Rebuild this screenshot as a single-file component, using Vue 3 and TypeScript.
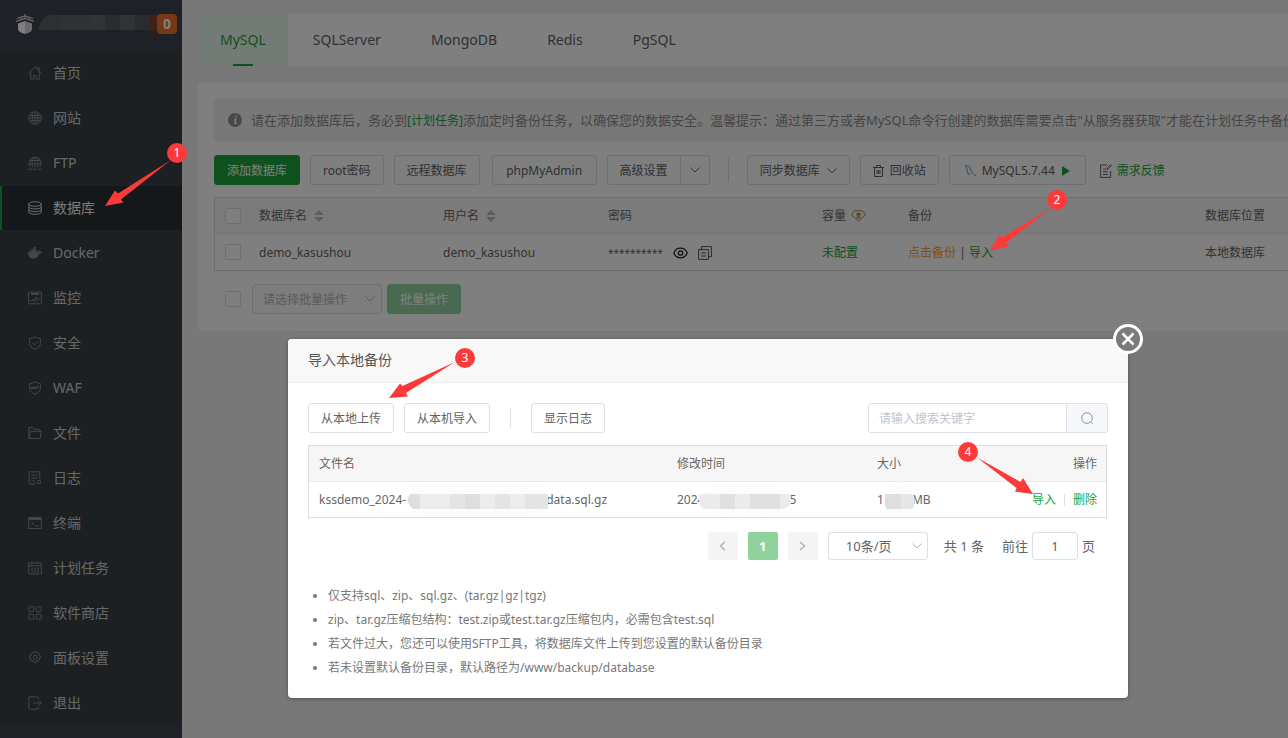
<script setup lang="ts">
import { ref } from 'vue'

interface MenuItem {
  label: string
  d: string
  solid?: boolean
}

const menu: MenuItem[] = [
  { label: '首页', d: 'M.8 7 7 1l6.2 6M2.8 5.500V13.200h3V9.500h2.400v3.700h3V5.500M9 1.500h2.200v2.500' },
  { label: '网站', d: 'M7 .8a6.2 6.2 0 1 0 0 12.4A6.2 6.2 0 0 0 7 .8ZM1.5 4.5h11M.8 7h12.4M1.5 9.5h11M7 .8v12.4M4.3 1.5v11M9.7 1.5v11' },
  { label: 'FTP', d: 'M2.600 11.200a6 6 0 1 1 8.800 0M1.800 4.500h10.400M1 8h12M7 1v10.500M4.800 1.500c-1.200 3-1.200 6.500 0 9.700M9.200 1.500c1.200 3 1.200 6.500 0 9.700M.5 13.200h4M5.500 13.200h3M9.500 13.200h4' },
  { label: '数据库', d: 'M.8 3c0-3 12.4-3 12.4 0s-12.4 3-12.4 0v8c0 3 12.4 3 12.4 0V3M.8 5.8c0 2.8 12.4 2.8 12.4 0M.8 8.5c0 2.8 12.4 2.8 12.4 0' },
  { label: 'Docker', d: 'M0 6.600h1.200V4.700h1.900v1.900h.3V4.700H3.400V2.800h1.900v1.900h.3V2.800h.300V1h1.900v5.600h.3V4.700h1.700v1.900h.6c.5-.7.3-1.600-.1-2.300l.5-.5c.7.5 1 1.100 1.100 1.700.7-.1 1.400 0 2.100.5-.4 1-1.200 1.500-2.400 1.500-1.300 3.400-3.500 5-6.500 5C1.800 12.800 0 10.300 0 6.600Z', solid: true },
  { label: '监控', d: 'M.6 1.200h12.800v11.600H.6zM3 2.500h8M3 3.500h8M2.500 9.800h1.500l1.200-2 1.300 2.700 1.700-4.500 1.300 3 1.200-1h1' },
  { label: '安全', d: 'M7 .8c1.700 1.200 3.600 1.600 5.400 1.700v4.700c0 3-2.400 5-5.400 6-3-1-5.400-3-5.400-6V2.500C3.400 2.400 5.300 2 7 .8ZM4.500 7l2 1.900 3.300-3.500' },
  { label: 'WAF', d: 'M7 .8c1.700 1.200 3.600 1.600 5.400 1.700v4.700c0 3-2.400 5-5.400 6-3-1-5.400-3-5.400-6V2.500C3.400 2.400 5.300 2 7 .8ZM3 5.500l.7 2.500.7-2 .7 2 .6-2.500M6 8l.9-2.500L7.800 8M6.300 7.300h1.200M9 8.200V5.600h2M9 6.900h1.600' },
  { label: '文件', d: 'M.8 12.500V1.500h4l1.400 1.800h5.600v2M.8 12.500 2.800 5.300h10.600l-1.300 7.200Z' },
  { label: '日志', d: 'M8 13H1.200V.8h10.600v7M3.500 4h6M3.500 7h6M3.500 10h3.500M11 9.300a1.700 1.700 0 1 0 0 3.400 1.700 1.700 0 0 0 0-3.400Z' },
  { label: '终端', d: 'M.7 1.500h12.600v11H.7zM.7 2.500h12.600M.7 3.500h12.600M3.500 6l2 1.800-2 1.800M7 10h3.500' },
  { label: '计划任务', d: 'M.7 2h12.600v11H.7zM.7 4.800h12.600M4 .5v2.500M10 .5v2.500M3 7.200h2M6 7.200h2M9 7.200h2M3 9h2M6 9h2M9 9h2M3 11h2M6 11h2M9 11h2' },
  { label: '软件商店', d: 'M1.800.7h3a1 1 0 0 1 1 1v3a1 1 0 0 1-1 1h-3a1 1 0 0 1-1-1v-3a1 1 0 0 1 1-1ZM9.200.7h3a1 1 0 0 1 1 1v3a1 1 0 0 1-1 1h-3a1 1 0 0 1-1-1v-3a1 1 0 0 1 1-1ZM1.800 8.200h3a1 1 0 0 1 1 1v3a1 1 0 0 1-1 1h-3a1 1 0 0 1-1-1v-3a1 1 0 0 1 1-1ZM9.200 8.200h3a1 1 0 0 1 1 1v3a1 1 0 0 1-1 1h-3a1 1 0 0 1-1-1v-3a1 1 0 0 1 1-1Z' },
  { label: '面板设置', d: 'M5.500 2.300 6.200.7h1.600l.7 1.600 1.700-.7 1.200 1.200-.7 1.700 1.800.8v1.500l-1.800.8.9 1.800-1.200 1.200-1.900-.8-.7 1.800H6.200l-.7-1.800-1.900.8-1.200-1.200.9-1.800L1.400 6.800V5.300l1.900-.8-.7-1.700 1.200-1.200ZM7 4.300a2 2 0 1 0 0 4 2 2 0 0 0 0-4Z' },
  { label: '退出', d: 'M10.500 3.500V2a1.200 1.200 0 0 0-1.200-1.200H2A1.200 1.200 0 0 0 .8 2v10A1.200 1.200 0 0 0 2 13.200h7.300a1.200 1.200 0 0 0 1.200-1.200v-1.500M5 7h8.200M11 4.800 13.200 7 11 9.200' },
]

const tabs = ['MySQL', 'SQLServer', 'MongoDB', 'Redis', 'PgSQL']
const activeMenu = ref('数据库')
const activeTab = ref('MySQL')
const keyword = ref('')
const jumpPage = ref('1')

const tips = [
  '仅支持sql、zip、sql.gz、(tar.gz|gz|tgz)',
  'zip、tar.gz压缩包结构：test.zip或test.tar.gz压缩包内，必需包含test.sql',
  '若文件过大，您还可以使用SFTP工具，将数据库文件上传到您设置的默认备份目录',
  '若未设置默认备份目录，默认路径为/www/backup/database',
]

const steps = [
  { n: 1, x: 177, y: 153, d: 'M171 160 121 199.500 123.500 202.500 105 206 115 190.500 118 193.500Z' },
  { n: 2, x: 1057, y: 200, d: 'M1051 208 1006 243 1008.500 246.500 990 250.500 999.500 234.500 1002 237.500Z' },
  { n: 3, x: 465, y: 358, d: 'M455 362 406 393 408 396.500 389 398 400 383.500 402.500 386Z' },
  { n: 4, x: 968, y: 452, d: 'M977 457.500 1020.500 482 1023 478 1033 494 1015 491.500 1016.500 488Z' },
]
</script>

<template>
  <div class="page">
    <aside class="side">
      <div class="brand">
        <svg class="logo" width="18" height="20" viewBox="0 0 18 20">
          <path d="M1 4.500 9 2l8 2.500M0 7.500 9 4.500l9 3" fill="none" stroke="#d8d8d8" stroke-width="1.200" />
          <path d="M9 0v5M5 3v3M13 3v3" stroke="#d8d8d8" stroke-width="1" />
          <path d="M2 9.500 9 7v13c-3.500-1-7-2.500-7-5Z" fill="#fff" />
          <path d="M9 7l7 2.500V15c0 2.500-3.500 4-7 5Z" fill="#d4d4d4" />
        </svg>
        <svg class="mask" width="119" height="26" viewBox="0 0 119 26">
          <path d="M0 15C2 7 6 0 12 0h106v15Z" fill="#5a5e62" />
          <path d="M22 0h30v15H22z" fill="#5e6266" />
          <path d="M52 0h15v15H52zM82 0h15v15H82z" fill="#62666a" />
          <path d="M67 0h15v15H67zM97 0h15v15H97z" fill="#555b60" />
          <path d="M112 0h7v15h-7z" fill="#7d4431" />
          <path d="M112 15h7v5l-7 5Z" fill="#4c4442" />
        </svg>
        <span class="badge">0</span>
      </div>
      <nav class="menu">
        <a v-for="m in menu" :key="m.label" href="#" :class="{ on: m.label === activeMenu }" @click.prevent="activeMenu = m.label">
          <svg width="14" height="14" viewBox="0 0 14 14" :class="{ solid: m.solid }"><path :d="m.d" /></svg>
          <span>{{ m.label }}</span>
        </a>
      </nav>
    </aside>

    <main class="main">
      <nav class="tabs">
        <button v-for="t in tabs" :key="t" type="button" :class="{ on: t === activeTab }" @click="activeTab = t">{{ t }}</button>
      </nav>

      <section class="panel">
        <div class="notice">
          <svg width="14" height="14" viewBox="0 0 14 14">
            <circle cx="7" cy="7" r="7" fill="#8c8f94" />
            <path d="M7.500 2.500h1.700l-.3 1.700H7.200zM6.800 5.300h2L8 9.800l.9-.3-.2 1.200c-1.500.9-2.900.7-2.600-.9l.6-3.300-.8-.1Z" fill="#f0f0f0" />
          </svg>
          <span>请在添加数据库后，务必到<a href="#">[计划任务]</a>添加定时备份任务，以确保您的数据安全。温馨提示：通过第三方或者MySQL命令行创建的数据库需要点击"从服务器获取"才能在计划任务中备份</span>
        </div>

        <div class="tools">
          <button type="button" class="btn primary">添加数据库</button>
          <button type="button" class="btn">root密码</button>
          <button type="button" class="btn">远程数据库</button>
          <button type="button" class="btn wide">phpMyAdmin</button>
          <div class="split">
            <button type="button" class="btn">高级设置</button>
            <button type="button" class="btn caret" aria-label="更多">
              <svg width="10" height="6" viewBox="0 0 10 6"><path d="M.5.5 5 5 9.500.5" /></svg>
            </button>
          </div>
          <i class="rule"></i>
          <button type="button" class="btn">同步数据库<svg class="chev" width="10" height="6" viewBox="0 0 10 6"><path d="M.5.5 5 5 9.500.5" /></svg></button>
          <button type="button" class="btn">
            <svg class="lead" width="11" height="12" viewBox="0 0 11 12"><path d="M0 2.500h11M3.500 2.500v-2h4v2M1.500 2.500v9h8v-9M4 5v4M5.500 5v4M7 5v4" /></svg>回收站
          </button>
          <button type="button" class="btn mysql">
            <svg class="dolphin" width="12" height="12" viewBox="0 0 12 12"><path d="M.5.7c2-.5 3.500.5 4.300 2C6 5 6 7 7.500 8.200c1.200.9 2.500 1 3.500 3L9.300 10M.5.7 2 3.500c.3 2 .3 4 1.300 6l.7-1.200 1.200 1.500" /></svg>MySQL5.7.44<svg class="play" width="8" height="10" viewBox="0 0 8 10"><path d="M0 0 8 5 0 10Z" /></svg>
          </button>
          <a href="#" class="feedback">
            <svg width="12" height="14" viewBox="0 0 12 14"><path d="M7 1H.6v12.400h10V7M3 5h3M3 7.800h5M3 10.500h5M7 5.500l.3-1.700L10.500.6l1 1-3.200 3.200Z" /></svg>需求反馈
          </a>
        </div>

        <table class="grid">
          <colgroup><col class="c1" /><col class="c2" /><col class="c3" /><col class="c4" /><col class="c5" /><col class="c6" /><col /></colgroup>
          <thead>
            <tr>
              <th class="tick"><input type="checkbox" aria-label="全选" /></th>
              <th>数据库名<svg class="sort" width="10" height="12" viewBox="0 0 10 12"><path d="M0 5 5 0l5 5ZM0 7l5 5 5-5Z" /></svg></th>
              <th>用户名<svg class="sort" width="10" height="12" viewBox="0 0 10 12"><path d="M0 5 5 0l5 5ZM0 7l5 5 5-5Z" /></svg></th>
              <th>密码</th>
              <th>容量<svg class="gem" width="15" height="12" viewBox="0 0 15 12"><path d="M3.500.7h8l3 4L7.500 11.300.6 4.700ZM7.500 2.500 5 4.500h5ZM7.500 3v5M5.500 6h4M5 8h5" /></svg></th>
              <th>备份</th>
              <th>数据库位置</th>
            </tr>
          </thead>
          <tbody>
            <tr>
              <td class="tick"><input type="checkbox" aria-label="选择 demo_kasushou" /></td>
              <td>demo_kasushou</td>
              <td>demo_kasushou</td>
              <td>
                <div class="pwd">
                  <span>**********</span>
                  <svg width="15" height="12" viewBox="0 0 15 12" class="eye"><path d="M.8 6C3.500-.4 11.500-.4 14.200 6 11.500 12.400 3.500 12.400.8 6ZM7.500 3.800a2.200 2.200 0 1 0 0 4.400 2.200 2.200 0 0 0 0-4.400Z" /></svg>
                  <svg width="14" height="14" viewBox="0 0 14 14" class="copy"><path d="M.6 3.600h9.800v9.800H.6zM3.400 3.600V.6h10v10h-3M3 7h5M3 10h5" /></svg>
                </div>
              </td>
              <td><a href="#">未配置</a></td>
              <td><a href="#" class="warn">点击备份</a> | <a href="#">导入</a></td>
              <td>本地数据库</td>
            </tr>
          </tbody>
        </table>

        <div class="batch">
          <input type="checkbox" aria-label="全选批量" />
          <div class="pick">
            <select aria-label="批量操作" disabled><option>请选择批量操作</option></select>
            <svg width="12" height="7" viewBox="0 0 12 7"><path d="M.7.7 6 6l5.300-5.300" /></svg>
          </div>
          <button type="button" class="btn soft">批量操作</button>
        </div>
      </section>
    </main>

    <div class="shade"></div>

    <div class="dialog" role="dialog" aria-labelledby="dlg-title">
      <header><h2 id="dlg-title">导入本地备份</h2></header>
      <button type="button" class="close" aria-label="关闭">
        <svg width="14" height="14" viewBox="0 0 14 14"><path d="M1.500 1.500l11 11M12.500 1.500l-11 11" /></svg>
      </button>
      <div class="body">
        <div class="bar">
          <button type="button" class="btn">从本地上传</button>
          <button type="button" class="btn">从本机导入</button>
          <i class="rule"></i>
          <button type="button" class="btn">显示日志</button>
          <div class="search">
            <input v-model="keyword" type="text" placeholder="请输入搜索关键字" aria-label="搜索" />
            <button type="button" aria-label="搜索">
              <svg width="13" height="13" viewBox="0 0 13 13"><path d="M6 .8a5.300 5.300 0 1 0 0 10.600A5.300 5.300 0 0 0 6 .8ZM9.800 10l2 2" /></svg>
            </button>
          </div>
        </div>

        <table class="files">
          <colgroup><col class="f1" /><col class="f2" /><col class="f3" /><col /></colgroup>
          <thead>
            <tr><th>文件名</th><th>修改时间</th><th>大小</th><th class="end">操作</th></tr>
          </thead>
          <tbody>
            <tr>
              <td>
                <div class="cell">
                  <span>kssdemo_2024-</span>
                  <svg class="veil name" width="140" height="16" viewBox="0 0 140 16">
                    <path d="M-2 6C0-2 4-10 20-10h94c20 0 26 10 26 16 0 10-8 16-26 16H22C6 22-2 14-2 6Z" fill="#fcfcfc" />
                    <path d="M0 5Q1 0 4 0h136v15H6Q0 12 0 5Z" fill="#ececec" />
                    <path d="M0 5Q1 0 4 0h8v15H6Q0 12 0 5ZM57 0h15v15H57z" fill="#dedede" />
                    <path d="M42 0h15v15H42zM87 0h15v15H87zM117 0h23v15h-23z" fill="#e4e4e4" />
                  </svg>
                  <span class="tuck">data.sql.gz</span>
                </div>
              </td>
              <td>
                <div class="cell">
                  <span>2024</span>
                  <svg class="veil over" width="92" height="16" viewBox="0 0 92 16">
                    <path d="M3 8C4-4 20-10 42-10s48 2 50 16c0 10-12 14-40 15-30 1-48-2-49-13Z" fill="#fcfcfc" />
                    <path d="M0 0h92v7q-1 6-8 8H5Q0 13 0 7Z" fill="#ebebeb" />
                    <path d="M21 0h15v15H21zM51 0h30v15H51z" fill="#e0e0e0" />
                  </svg>
                  <span class="tuck">5</span>
                </div>
              </td>
              <td>
                <div class="cell">
                  <span>1</span>
                  <svg class="veil" width="30" height="16" viewBox="0 0 30 16">
                    <ellipse cx="15" cy="6" rx="15" ry="15" fill="#fcfcfc" />
                    <path d="M1 0h29v13l-3 2H3Q1 13 1 8Z" fill="#e6e6e6" />
                    <path d="M1 0h16v15H3Q1 13 1 8Z" fill="#dedede" />
                  </svg>
                  <span class="tuck">MB</span>
                </div>
              </td>
              <td class="end"><a href="#">导入</a><i class="bar-sep"></i><a href="#">删除</a></td>
            </tr>
          </tbody>
        </table>

        <div class="pager">
          <button type="button" aria-label="上一页" disabled><svg width="7" height="10" viewBox="0 0 7 10"><path d="M6 .8 1.500 5 6 9.200" /></svg></button>
          <button type="button" class="cur">1</button>
          <button type="button" aria-label="下一页" disabled><svg width="7" height="10" viewBox="0 0 7 10"><path d="M1 .8 5.500 5 1 9.200" /></svg></button>
          <div class="pick size">
            <select aria-label="每页条数"><option>10条/页</option></select>
            <svg width="10" height="6" viewBox="0 0 10 6"><path d="M.5.5 5 5 9.500.5" /></svg>
          </div>
          <span class="total">共 1 条</span>
          <label>前往<input v-model="jumpPage" type="text" />页</label>
        </div>

        <ul class="tips">
          <li v-for="t in tips" :key="t">{{ t }}</li>
        </ul>
      </div>
    </div>

    <svg class="steps" width="1288" height="738" viewBox="0 0 1288 738">
      <g v-for="s in steps" :key="s.n">
        <path :d="s.d" />
        <circle :cx="s.x" :cy="s.y" r="10" />
        <text :x="s.x" :y="s.y + 4">{{ s.n }}</text>
      </g>
    </svg>
  </div>
</template>

<style>
body {
  margin: 0;
}
</style>

<style scoped>
.page {
  position: relative;
  display: flex;
  height: 100vh;
  overflow: hidden;
  background: #f0f0f0;
  color: #666;
  font: 12px/18px 'Noto Sans', 'Noto Sans CJK SC', sans-serif;
}
.page * {
  box-sizing: border-box;
}
button,
input,
select {
  margin: 0;
  font: inherit;
  color: inherit;
}
svg {
  flex: none;
  fill: none;
  stroke: currentColor;
}
a {
  color: #20a53a;
  text-decoration: none;
}

/* sidebar */
.side {
  flex: none;
  width: 182px;
  background: #3c434c;
}
.brand {
  display: flex;
  align-items: flex-start;
  height: 51px;
  padding: 14px 0 0 16px;
}
.logo {
  stroke: none;
}
.mask {
  margin: 1px 0 0 4px;
  stroke: none;
}
.badge {
  width: 20px;
  height: 20px;
  border-radius: 4px;
  background: #f0702b;
  color: #fff;
  font-size: 14px;
  font-weight: 700;
  line-height: 20px;
  text-align: center;
}
.menu {
  background: #394045;
}
.menu a {
  display: flex;
  align-items: center;
  gap: 11px;
  height: 44px;
  margin-bottom: 1px;
  padding-left: 26px;
  border-left: 2px solid transparent;
  color: #d0d0d0;
  font-size: 14px;
}
.menu a:last-child {
  margin-bottom: 0;
}
.menu a svg {
  color: #888c90;
}
.menu a.on {
  border-left-color: #20a53a;
  background: #2b3136;
  color: #f4f4f4;
}
.menu a.on svg {
  color: #dcdcdc;
}
.menu svg.solid {
  fill: currentColor;
  stroke: none;
}

/* content */
.main {
  flex: 1 0 auto;
  width: 1234px;
  padding: 14px 16px;
}
.tabs {
  display: flex;
  height: 52px;
  margin-bottom: 16px;
  border-radius: 4px;
  background: #fff;
  overflow: hidden;
}
.tabs button {
  position: relative;
  padding: 0 25px;
  border: 0;
  background: none;
  color: #606266;
  font-size: 14px;
}
.tabs button.on {
  padding: 0 22px;
  background: #e9f5eb;
  color: #20a53a;
}
.tabs button.on::after {
  content: '';
  position: absolute;
  bottom: 0;
  left: 50%;
  width: 20px;
  height: 2px;
  margin-left: -10px;
  background: #20a53a;
}
.panel {
  padding: 16px 16px 17px;
  border-radius: 4px;
  background: #fff;
}
.notice {
  display: flex;
  align-items: center;
  gap: 9px;
  height: 44px;
  margin-bottom: 13px;
  padding-left: 14px;
  border-radius: 4px;
  background: #f1f1f2;
  color: #8a8a8a;
  font-size: 13px;
  white-space: nowrap;
}
.notice svg {
  stroke: none;
}
.notice a {
  font-size: 12px;
}
.tools {
  display: flex;
  align-items: center;
  gap: 10px;
  margin-bottom: 12px;
}
.btn {
  display: flex;
  align-items: center;
  justify-content: center;
  height: 30px;
  padding: 1px 12px 0;
  border: 1px solid #dcdfe6;
  border-radius: 3px;
  background: #fff;
  color: #606266;
  line-height: 18px;
  white-space: nowrap;
}
.btn.primary {
  border-color: #20a53a;
  background: #20a53a;
  color: #fff;
}
.btn.soft {
  border-color: #93d5a0;
  background: #93d5a0;
  color: #fff;
}
.btn.wide {
  width: 105px;
  margin-left: 2px;
}
.split {
  display: flex;
}
.split .btn:first-child {
  border-radius: 3px 0 0 3px;
}
.split .caret {
  width: 30px;
  margin-left: -1px;
  padding: 0;
  border-radius: 0 3px 3px 0;
}
.rule {
  width: 1px;
  height: 24px;
  background: #dcdfe6;
}
.tools .rule {
  margin: 0 8px;
}
.chev {
  margin-left: 7px;
}
.lead {
  margin-right: 6px;
}
.btn.mysql {
  padding: 1px 15px 0;
}
.dolphin {
  margin-right: 5px;
  color: #6d9cb8;
}
.play {
  margin-left: 7px;
  fill: #20a53a;
  stroke: none;
}
.feedback {
  display: flex;
  align-items: center;
  gap: 5px;
  margin-left: 4px;
  padding-top: 1px;
}
.feedback svg {
  color: #606266;
}
table {
  width: 100%;
  border: 1px solid #ddd;
  border-spacing: 0;
  table-layout: fixed;
}
th,
td {
  height: 36px;
  padding: 0 8px;
  font-weight: 400;
  text-align: left;
  white-space: nowrap;
}
th {
  border-bottom: 1px solid #e8eaec;
  background: #f6f6f6;
}
.grid td {
  padding-top: 2px;
}
.c1 {
  width: 36px;
}
.c2 {
  width: 184px;
}
.c3 {
  width: 165px;
}
.c4 {
  width: 214px;
}
.c5 {
  width: 86px;
}
.c6 {
  width: 297px;
}
.grid .tick {
  padding: 0 0 0 10px;
}
input[type='checkbox'] {
  display: block;
  appearance: none;
  width: 16px;
  height: 16px;
  border: 1px solid #dcdfe6;
  border-radius: 2px;
  background: #fff;
}
.sort {
  margin-left: 7px;
  vertical-align: -2px;
  fill: #bbb;
  stroke: none;
}
.gem {
  margin-left: 5px;
  vertical-align: -2px;
  color: #b08a50;
}
.warn {
  color: #fc9d28;
}
.pwd {
  display: flex;
  align-items: center;
  gap: 10px;
}
.pwd span {
  font-size: 10px;
}
.eye {
  color: #222;
  stroke-width: 1.3;
}
.copy {
  color: #555;
}
.batch {
  display: flex;
  align-items: center;
  gap: 5px;
  margin-top: 13px;
  padding-left: 11px;
}
.pick {
  position: relative;
  width: 130px;
  height: 30px;
  color: #b5b8be;
}
.batch .pick {
  margin-left: 6px;
}
.pick select {
  width: 100%;
  height: 100%;
  padding: 1px 10px 0;
  appearance: none;
  border: 1px solid #dcdfe6;
  border-radius: 3px;
  background: #fafafa;
  opacity: 1;
}
.pick svg {
  position: absolute;
  top: 11px;
  right: 6px;
  pointer-events: none;
}
.shade {
  position: absolute;
  inset: 0;
  background: rgba(0, 0, 0, 0.5);
}

/* dialog */
.dialog {
  position: absolute;
  top: 339px;
  left: 288px;
  width: 840px;
  border-radius: 4px;
  background: #fff;
  box-shadow: 0 1px 4px rgba(0, 0, 0, 0.3);
}
.dialog header {
  height: 44px;
  padding-left: 20px;
  border-bottom: 1px solid #eee;
  border-radius: 4px 4px 0 0;
  background: #f8f8f8;
}
h2 {
  margin: 0;
  color: #555;
  font-size: 14px;
  font-weight: 400;
  line-height: 42px;
}
.close {
  position: absolute;
  top: -15px;
  right: -15px;
  display: flex;
  align-items: center;
  justify-content: center;
  width: 30px;
  height: 30px;
  padding: 0;
  border: 3px solid #fff;
  border-radius: 50%;
  background: #7b7b7b;
  color: #fff;
}
.close svg {
  stroke-width: 2.5;
}
.body {
  padding: 20px 20px 18px;
}
.bar {
  display: flex;
  align-items: center;
  gap: 10px;
  margin-bottom: 12px;
}
.bar .rule {
  height: 20px;
  margin: 0 10px;
}
.search {
  display: flex;
  width: 240px;
  height: 30px;
  margin-left: auto;
  border: 1px solid #dcdfe6;
  border-radius: 3px;
  overflow: hidden;
}
.search input {
  flex: 1;
  min-width: 0;
  padding: 2px 10px 0;
  border: 0;
  outline: 0;
}
.search input::placeholder {
  color: #c0c4cc;
}
.search button {
  width: 41px;
  padding: 0;
  border: 0;
  border-left: 1px solid #dcdfe6;
  background: #f5f7fa;
  color: #909399;
}
.search svg {
  vertical-align: middle;
}
.files {
  width: calc(100% - 1px);
}
.files th,
.files td {
  padding: 0 10px;
}
.files td {
  height: 35px;
}
.files .end {
  padding-right: 9px;
  text-align: right;
}
.f1 {
  width: 358px;
}
.f2 {
  width: 200px;
}
.f3 {
  width: 130px;
}
.cell {
  display: flex;
  align-items: center;
}
.veil {
  position: relative;
  margin-top: 5px;
  overflow: visible;
  stroke: none;
}
.veil.name {
  margin-left: 2px;
}
.veil.over {
  margin-left: -5px;
}
.tuck {
  margin-left: -2px;
}
.bar-sep {
  display: inline-block;
  width: 1px;
  height: 12px;
  margin: 0 8px;
  background: #dcdfe6;
  vertical-align: -2px;
}
.pager {
  display: flex;
  align-items: center;
  justify-content: flex-end;
  gap: 10px;
  margin-top: 14px;
  padding-right: 13px;
  color: #606266;
  font-size: 13px;
}
.pager button {
  width: 30px;
  height: 28px;
  padding: 0;
  border: 0;
  border-radius: 2px;
  background: #f4f4f5;
  color: #b4b7bd;
}
.pager button svg {
  stroke-width: 1.6;
}
.pager .cur {
  background: #90d29c;
  color: #fff;
  font-weight: 700;
}
.pick.size {
  width: 100px;
  height: 28px;
}
.pick.size select {
  padding: 0 17px;
  background: #fff;
  color: #606266;
}
.total {
  margin: 0 8px 0 6px;
}
.pager label {
  display: flex;
  align-items: center;
  gap: 4px;
}
.pager label input {
  width: 46px;
  height: 28px;
  padding: 0;
  border: 1px solid #dcdfe6;
  border-radius: 3px;
  text-align: center;
}
.tips {
  margin: 24px 0 0;
  padding-left: 20px;
  color: #777;
  line-height: 24px;
}

/* walkthrough markers */
.steps {
  position: absolute;
  top: 0;
  left: 0;
  fill: #fd3a3a;
  stroke: none;
  pointer-events: none;
}
.steps text {
  fill: #fff;
  font-size: 12px;
  text-anchor: middle;
}
</style>
